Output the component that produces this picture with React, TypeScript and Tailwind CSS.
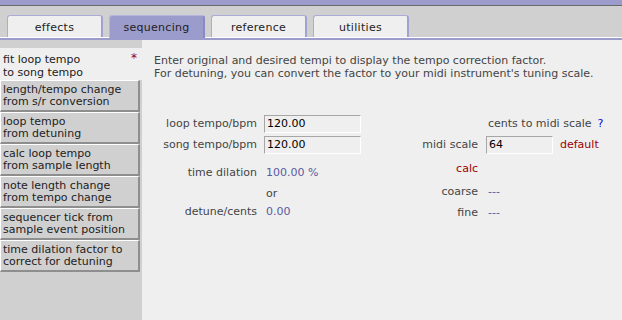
import { useState } from "react";

// tabs across the top
const tabs = ["effects", "sequencing", "reference", "utilities"];

// left hand menu, each entry is two lines
const menu = [
  ["fit loop tempo", "to song tempo"],
  ["length/tempo change", "from s/r conversion"],
  ["loop tempo", "from detuning"],
  ["calc loop tempo", "from sample length"],
  ["note length change", "from tempo change"],
  ["sequencer tick from", "sample event position"],
  ["time dilation factor to", "correct for detuning"],
];

const inputCls =
  "w-full h-[18px] bg-[#efefef] text-black text-[11px] leading-[13px] pl-[2px] border-t border-l border-[#a6a6a6] border-r-white border-b-white border-r border-b outline-none";

const App = () => {
  const [activeTab, setActiveTab] = useState<number>(1);
  const [activeItem, setActiveItem] = useState<number>(0);
  const [loopTempo, setLoopTempo] = useState<string>("120.00");
  const [songTempo, setSongTempo] = useState<string>("120.00");
  const [midiScale, setMidiScale] = useState<string>("64");

  return (
    <div className="w-[622px] h-[320px] overflow-hidden flex flex-col bg-[#efefef] text-[11px] leading-[13px] text-[#444] font-['DejaVu_Sans',Verdana,sans-serif]">
      {/* top strip */}
      <div className="h-[5px] bg-[#9c9ccc]" />
      <div className="h-px bg-[#6a6a6a]" />

      {/* tab bar */}
      <div className="flex items-end gap-[6px] pl-[7px] pt-[9px] bg-[#d0d0d0] border-b border-white">
        {tabs.map((tab, i) => (
          <div
            key={tab}
            onClick={() => setActiveTab(i)}
            className={
              i === activeTab
                ? "w-[96px] h-[23px] mb-[-1px] pt-[1px] flex items-center justify-center rounded-t-[3px] bg-[#9c9ccc] border-t border-l border-[#b4b4de] border-r-2 border-r-[#8a8ac2] text-[#222] tracking-[0.3px] cursor-pointer"
                : "w-[96px] h-[22px] pt-[2px] flex items-center justify-center rounded-t-[3px] bg-[#efefef] border-t border-l border-[#ababd8] border-r-2 border-r-[#a2a2d2] text-[#222] tracking-[0.3px] cursor-pointer"
            }
          >
            {tab}
          </div>
        ))}
      </div>
      <div className="h-[2px] bg-[#9c9ccc]" />

      <div className="flex flex-1">
        {/* sidebar */}
        <div className="w-[142px] bg-[#d0d0d0] pt-[8px] flex flex-col">
          {menu.map((lines, i) =>
            i === activeItem ? (
              <div
                key={i}
                className="w-[142px] h-[32px] bg-[#efefef] pl-[3px] pr-[5px] pt-[5px] flex justify-between text-[#222] cursor-pointer"
              >
                <div>
                  {lines[0]}
                  <br />
                  {lines[1]}
                </div>
                <span className="text-[#990000] text-[12px] leading-[12px] -mt-[1px]">*</span>
              </div>
            ) : (
              <div
                key={i}
                onClick={() => setActiveItem(i)}
                className="w-[140px] h-[32px] bg-[#d0d0d0] border-t border-l border-white border-r-2 border-b-2 border-r-[#8e8e8e] border-b-[#8e8e8e] pl-[2px] pt-[3px] leading-[12px] text-[#222] cursor-pointer"
              >
                {lines[0]}
                <br />
                {lines[1]}
              </div>
            )
          )}
        </div>

        {/* main panel */}
        <div className="flex-1 flex flex-col pl-[12px] pt-[14px]">
          <p>
            Enter original and desired tempi to display the tempo correction factor.
            <br />
            For detuning, you can convert the factor to your midi instrument's tuning scale.
          </p>

          <div className="flex mt-[33px]">
            {/* tempo fields */}
            <div className="flex flex-col w-[207px]">
              <div className="flex items-center h-[21px] gap-[7px]">
                <span className="w-[103px] text-right">loop tempo/bpm</span>
                <div className="w-[97px]">
                  <input className={inputCls} value={loopTempo} onChange={(e) => setLoopTempo(e.target.value)} />
                </div>
              </div>
              <div className="flex items-center h-[21px] gap-[7px]">
                <span className="w-[103px] text-right">song tempo/bpm</span>
                <div className="w-[97px]">
                  <input className={inputCls} value={songTempo} onChange={(e) => setSongTempo(e.target.value)} />
                </div>
              </div>
              <div className="flex items-center h-[22px] mt-[6px] gap-[7px]">
                <span className="w-[103px] text-right">time dilation</span>
                <span className="pl-[2px] text-[#5a5aa2]">100.00 %</span>
              </div>
              <div className="flex items-center h-[20px] gap-[7px]">
                <span className="w-[103px]" />
                <span className="pl-[2px]">or</span>
              </div>
              <div className="flex items-center h-[16px] gap-[7px]">
                <span className="w-[103px] text-right">detune/cents</span>
                <span className="pl-[2px] text-[#5a5aa2]">0.00</span>
              </div>
            </div>

            {/* midi scale conversion */}
            <div className="flex flex-col ml-[19px]">
              <div className="flex items-center h-[21px] gap-[8px]">
                <span className="w-[98px]" />
                <span className="pl-[2px] whitespace-nowrap">
                  cents to midi scale<span className="ml-[6px] text-[#0000dd]">?</span>
                </span>
              </div>
              <div className="flex items-center h-[21px] gap-[8px]">
                <span className="w-[98px] text-right">midi scale</span>
                <div className="w-[67px]">
                  <input className={inputCls} value={midiScale} onChange={(e) => setMidiScale(e.target.value)} />
                </div>
                <span className="ml-[-1px] text-[#990000]">default</span>
              </div>
              <div className="flex items-center h-[26px] gap-[8px]">
                <span className="w-[98px] text-right text-[#990000]">calc</span>
              </div>
              <div className="flex items-center h-[20px] gap-[8px]">
                <span className="w-[98px] text-right">coarse</span>
                <span className="pl-[2px] text-[#5a5aa2]">---</span>
              </div>
              <div className="flex items-center h-[22px] gap-[8px]">
                <span className="w-[98px] text-right">fine</span>
                <span className="pl-[2px] text-[#5a5aa2]">---</span>
              </div>
            </div>
          </div>
        </div>
      </div>
    </div>
  );
};

export default App;
